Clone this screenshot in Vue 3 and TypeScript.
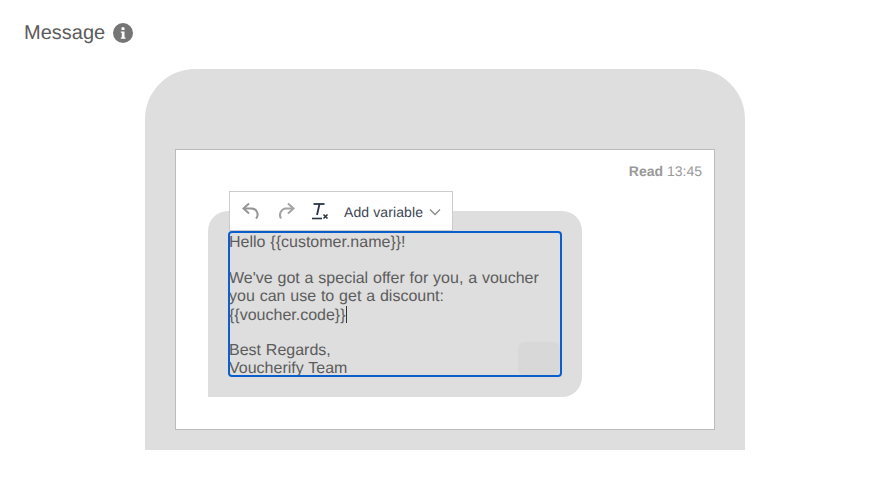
<template>
  <div class="page">
    <div class="label">
      <span>Message</span>
      <svg class="info" width="20" height="20" viewBox="0 0 20 20">
        <circle cx="10" cy="10" r="10" fill="#757575" />
        <rect x="8.500" y="4.200" width="3" height="2.800" rx="0.600" fill="#fff" />
        <path d="M7.800 8.400h3.700v6h1v1.400H7.800v-1.400h1v-4.600h-1z" fill="#fff" />
      </svg>
    </div>

    <div class="phone">
      <div class="screen">
        <div class="status"><b>Read</b> {{ time }}</div>
        <div class="bubble">
          <div class="toolbar">
            <svg class="tool" width="20" height="20" viewBox="0 0 20 20" fill="none" stroke="#959595" stroke-width="2">
              <path d="M8 2.500 2.500 7.500 8 12.500" />
              <path d="M3 7.500h7.500a6 6 0 0 1 4.500 10" />
            </svg>
            <svg class="tool" width="20" height="20" viewBox="0 0 20 20" fill="none" stroke="#a3a3a3" stroke-width="2">
              <path d="M12 2.500l5.500 5L12 12.500" />
              <path d="M17 7.500h-7a6.500 6.500 0 0 0-5 10" />
            </svg>
            <svg class="tool clear" width="20" height="20" viewBox="0 0 20 20" fill="none" stroke="#2b3443">
              <path d="M2.500 3h11" stroke-width="1.800" />
              <path d="M8.500 3 6 14" stroke-width="1.800" />
              <path d="M1 17.500h10" stroke-width="1.600" />
              <path d="M12.500 13.500l4 4m0-4-4 4" stroke-width="1.600" />
            </svg>
            <div class="variable">
              <span>Add variable</span>
              <svg width="12" height="8" viewBox="0 0 12 8" fill="none" stroke="#8a8a8a" stroke-width="1.300">
                <path d="M1 1.500l5 5 5-5" />
              </svg>
            </div>
          </div>
          <div class="editor">
            <div v-for="(line, i) in lines" :key="i" class="line">{{ line }}<span v-if="i === 4" class="caret"></span></div>
            <div class="handle"></div>
          </div>
        </div>
      </div>
    </div>
  </div>
</template>

<script setup lang="ts">
const time = '13:45'

const lines: string[] = [
  'Hello {{customer.name}}!',
  '\u00a0',
  "We've got a special offer for you, a voucher",
  'you can use to get a discount:',
  '{{voucher.code}}',
  '\u00a0',
  'Best Regards,',
  'Voucherify Team',
]
</script>

<style>
html,
body {
  margin: 0;
  background: #fff;
}
</style>

<style scoped>
.page {
  width: 876px;
  height: 494px;
  overflow: hidden;
  box-sizing: border-box;
  padding-top: 20px;
  font-family: "Liberation Sans", Arial, sans-serif;
  text-rendering: geometricPrecision;
}

.label {
  display: flex;
  align-items: center;
  gap: 8px;
  height: 24px;
  padding-left: 24px;
  font-size: 20px;
  color: #5c5c5c;
}

.label span {
  padding-top: 2px;
}

.info {
  flex: none;
  margin-top: 2px;
}

.phone {
  box-sizing: border-box;
  width: 600px;
  height: 381px;
  margin: 25px 0 0 145px;
  padding: 80px 30px 20px;
  background: #dedede;
  border-radius: 50px 50px 0 0;
}

.screen {
  box-sizing: border-box;
  height: 281px;
  padding: 12px 12px 0 32px;
  background: #fff;
  border: 1px solid #bbb;
}

.status {
  height: 18px;
  font-size: 14px;
  line-height: 18px;
  text-align: right;
  color: #999;
}

.bubble {
  position: relative;
  box-sizing: border-box;
  width: 374px;
  height: 186px;
  margin-top: 31px;
  padding: 20px;
  background: #dedede;
  border-radius: 20px 20px 20px 0;
}

.toolbar {
  position: absolute;
  left: 21px;
  top: -20px;
  z-index: 1;
  box-sizing: border-box;
  display: flex;
  align-items: center;
  width: 224px;
  height: 40px;
  padding-left: 11px;
  background: #fff;
  border: 1px solid #ccc;
}

.tool {
  flex: none;
  margin-right: 15px;
}

.tool.clear {
  margin-right: 13px;
}

.variable {
  display: flex;
  align-items: center;
  gap: 6px;
  padding-top: 2px;
  font-size: 14px;
  letter-spacing: 0.1px;
  color: #3c4554;
}

.editor {
  position: relative;
  box-sizing: border-box;
  width: 334px;
  height: 146px;
  padding-top: 1px;
  overflow: hidden;
  background: #dedede;
  border: 2px solid #0a5fcc;
  border-radius: 4px;
  font-size: 16px;
  line-height: 18px;
  word-spacing: 0.4px;
  color: #5c5c5c;
}

.line {
  height: 18px;
  margin-left: -1px;
  white-space: nowrap;
}

.caret {
  display: inline-block;
  width: 1px;
  height: 17px;
  vertical-align: -3px;
  background: #333;
}

.handle {
  position: absolute;
  right: 0;
  bottom: 0;
  width: 42px;
  height: 33px;
  background: #d8d8d8;
  border-radius: 6px;
}
</style>
